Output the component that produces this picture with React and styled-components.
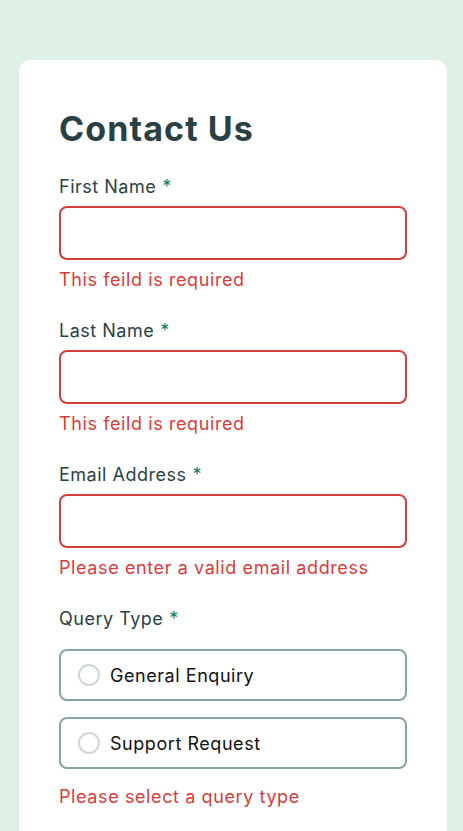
import React from "react";
import styled, { createGlobalStyle } from "styled-components";

const Global = createGlobalStyle`
  * { box-sizing: border-box; }
  body {
    margin: 0;
    background: #dff1e7;
    font-family: Inter, "Noto Sans", sans-serif;
  }
`;

const Page = styled.div`
  padding: 60px 16px 0 19px;
`;

const Card = styled.form`
  background: #ffffff;
  border-radius: 12px;
  padding: 0 40px 40px;
  display: flex;
  flex-direction: column;
`;

const Title = styled.h1`
  margin: 41px 0 18px;
  font-size: 34px;
  line-height: 56px;
  font-weight: 700;
  color: #2a4144;
  letter-spacing: 1.1px;
`;

const Field = styled.div`
  display: flex;
  flex-direction: column;
  margin-bottom: 27px;
`;

const Label = styled.label`
  font-size: 18px;
  line-height: 24px;
  color: #2a4144;
  letter-spacing: 0.5px;
  margin-bottom: ${(p) => p.$gap || 7}px;
`;

const Star = styled.span`
  color: #0c7d69;
  margin-left: 6px;
`;

const Input = styled.input`
  height: 54px;
  width: 100%;
  border: 2px solid ${(p) => (p.$error ? "#d73c3c" : "#87a3a6")};
  border-radius: 8px;
  padding: 0 20px;
  font-size: 18px;
  font-family: inherit;
  outline: none;
  background: #fff;
`;

const Error = styled.span`
  margin-top: ${(p) => p.$top || 8}px;
  font-size: 18px;
  line-height: 24px;
  letter-spacing: 0.6px;
  color: #d73c3c;
`;

const Options = styled.div`
  display: flex;
  flex-direction: column;
  gap: 16px;
`;

const Option = styled.label`
  height: 52px;
  display: flex;
  align-items: center;
  gap: 10px;
  padding: 0 17px;
  border: 2px solid #87a3a6;
  border-radius: 8px;
  font-size: 18px;
  color: #111;
  letter-spacing: 0.55px;
`;

const Circle = styled.span`
  width: 22px;
  height: 22px;
  border-radius: 50%;
  border: 2px solid #ced6da;
  flex-shrink: 0;
`;

const TextField = ({ label, error }) => (
  <Field>
    <Label>
      {label}
      <Star>*</Star>
    </Label>
    <Input $error />
    <Error>{error}</Error>
  </Field>
);

export default function App() {
  return (
    <Page>
      <Global />
      <Card onSubmit={(e) => e.preventDefault()}>
        <Title>Contact Us</Title>
        <TextField label="First Name" error="This feild is required" />
        <TextField label="Last Name" error="This feild is required" />
        <TextField label="Email Address" error="Please enter a valid email address" />
        <Field>
          <Label $gap={18}>
            Query Type
            <Star>*</Star>
          </Label>
          <Options>
            <Option>
              <Circle />
              General Enquiry
            </Option>
            <Option>
              <Circle />
              Support Request
            </Option>
          </Options>
          <Error $top={16}>Please select a query type</Error>
        </Field>
      </Card>
    </Page>
  );
}
